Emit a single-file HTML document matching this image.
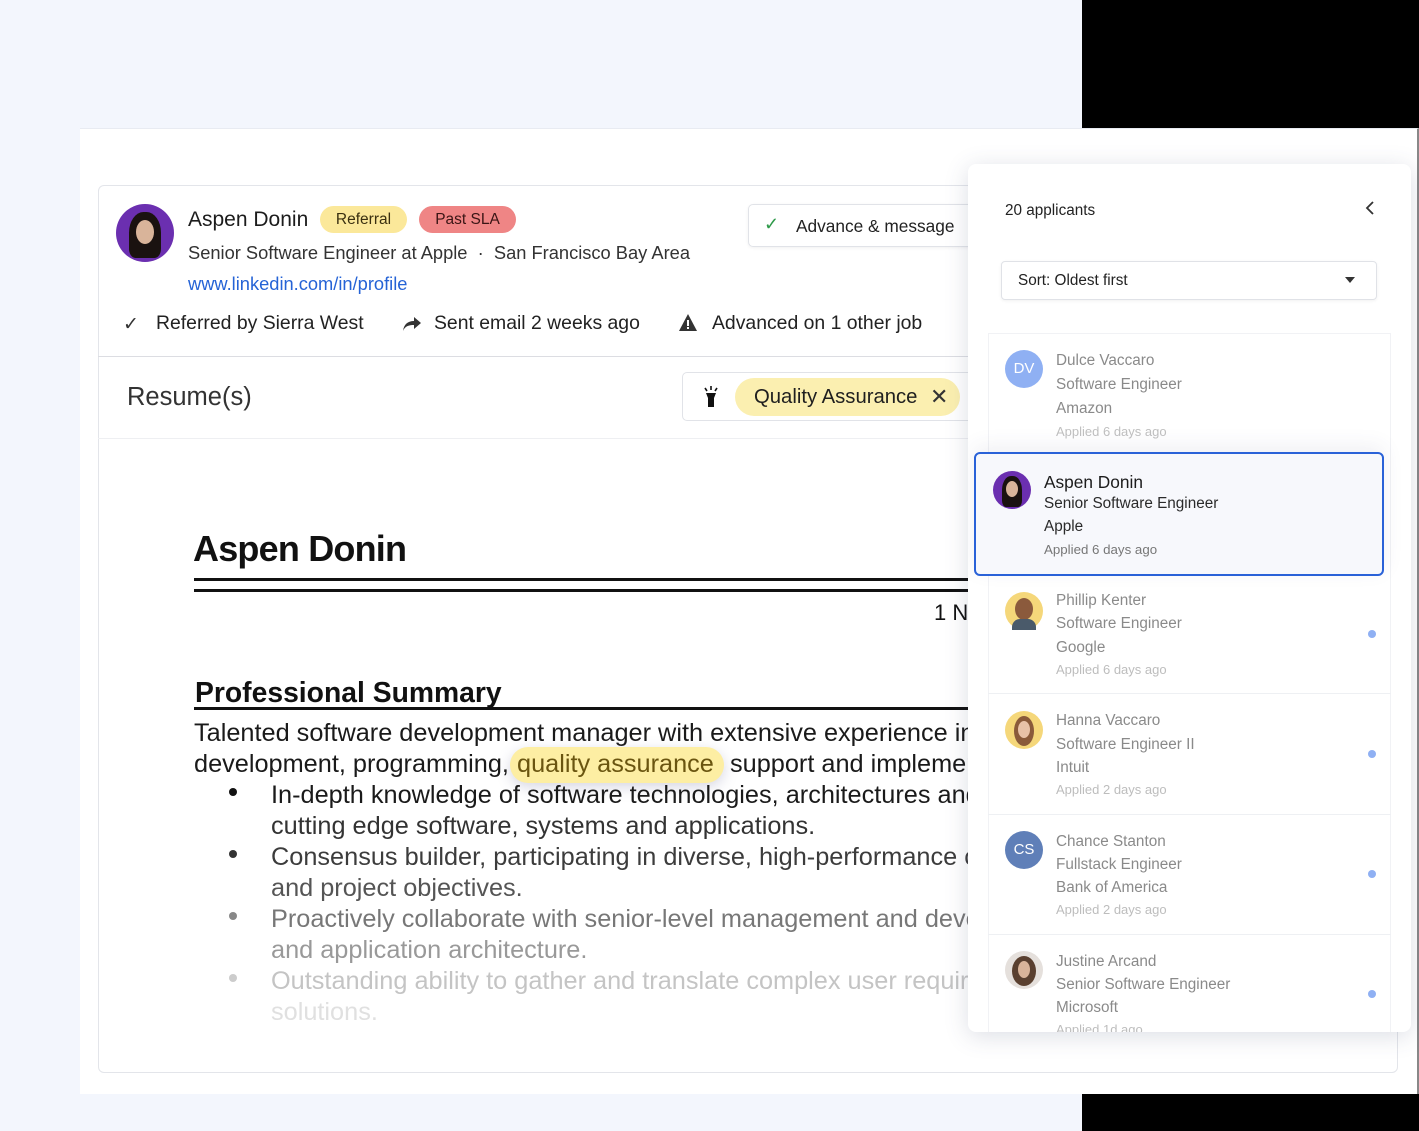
<!DOCTYPE html>
<html><head><meta charset="utf-8"><style>
*{margin:0;padding:0;box-sizing:border-box}
body{width:1419px;height:1131px;background:#f3f6fd;position:relative;overflow:hidden;font-family:"Liberation Sans",sans-serif;color:#1f1f1f}
.a{position:absolute;white-space:nowrap}
.blk{position:absolute;background:#000}
.rt{font-size:25.3px;line-height:31px;color:#1a1a1a}
.av{position:absolute;width:38px;height:38px;border-radius:50%}
.it .t{position:absolute;font-size:15.3px;color:#8a8a8a;white-space:nowrap}
.dot{position:absolute;width:8px;height:8px;border-radius:50%;background:#8fb0f3}
.bul{position:absolute;width:8px;height:8px;border-radius:50%}
</style></head><body>
<div class="blk" style="left:1082px;top:0;width:337px;height:128px"></div>
<div class="blk" style="left:1082px;top:1094px;width:337px;height:37px"></div>
<div class="a" style="left:80px;top:128px;width:1339px;height:966px;background:#fff;border-right:2px solid #888;border-top:1px solid #e8ebf2"></div>
<div class="a" style="left:98px;top:185px;width:1300px;height:888px;border:1px solid #e3e5ea;border-radius:6px;background:#fff"></div>
<div class="a" style="left:98px;top:356px;width:870px;height:1px;background:#dcdde2"></div>
<div class="a" style="left:98px;top:438px;width:870px;height:1px;background:#eeeff2"></div>

<!-- header -->
<div class="av" style="left:116px;top:204px;width:58px;height:58px;background:#6b2fb0"><div style="position:absolute;left:13px;top:8px;width:32px;height:46px;border-radius:45% 45% 20% 20%;background:#1a1210"></div><div style="position:absolute;left:20px;top:16px;width:18px;height:24px;border-radius:50%;background:#d9b49a"></div></div>
<div class="a" style="left:188px;top:208px;font-size:21px;color:#1c1c1c">Aspen Donin</div>
<div class="a" style="left:320px;top:206px;width:87px;height:27px;border-radius:14px;background:#fbe89a;font-size:15.5px;line-height:27px;text-align:center;color:#3a3010">Referral</div>
<div class="a" style="left:419px;top:206px;width:97px;height:27px;border-radius:14px;background:#ef8585;font-size:15.5px;line-height:27px;text-align:center;color:#3a1515">Past SLA</div>
<div class="a" style="left:188px;top:242px;font-size:18.3px;color:#333">Senior Software Engineer at Apple &nbsp;·&nbsp; San Francisco Bay Area</div>
<div class="a" style="left:188px;top:273px;font-size:18.3px;color:#2563d6">www.linkedin.com/in/profile</div>
<div class="a" style="left:748px;top:204px;width:240px;height:43px;border:1px solid #e1e3e8;border-radius:5px;box-shadow:0 1px 3px rgba(0,0,0,.06)"></div>
<div class="a" style="left:764px;top:214px;font-size:18px;color:#2f9a4a">✓</div>
<div class="a" style="left:796px;top:216px;font-size:17.3px;color:#222">Advance &amp; message</div>
<div class="a" style="left:123px;top:313px;font-size:19px;color:#333">✓</div>
<div class="a" style="left:156px;top:312px;font-size:19.4px;color:#222">Referred by Sierra West</div>
<svg class="a" style="left:402px;top:316px" width="20" height="16" viewBox="0 0 20 16"><path d="M12 1l7 6-7 6V9C7 9 3 10 1 15 2 8 6 5 12 5z" fill="#333"/></svg>
<div class="a" style="left:434px;top:312px;font-size:19.4px;color:#222">Sent email 2 weeks ago</div>
<svg class="a" style="left:678px;top:313px" width="20" height="19" viewBox="0 0 20 19"><path d="M10 1L19 18H1z" fill="#333"/><rect x="9" y="7" width="2" height="6" fill="#fff"/><rect x="9" y="14" width="2" height="2" fill="#fff"/></svg>
<div class="a" style="left:712px;top:312px;font-size:19.4px;color:#222">Advanced on 1 other job</div>

<div class="a" style="left:127px;top:383px;font-size:25.5px;color:#333">Resume(s)</div>
<div class="a" style="left:682px;top:372px;width:300px;height:49px;border:1px solid #e1e3e8;border-radius:5px"></div>
<svg class="a" style="left:702px;top:385px" width="18" height="24" viewBox="0 0 18 24"><path d="M4 8h10l-2 5v9H6v-9z" fill="#111"/><path d="M9 1v4M3 3l2 3M15 3l-2 3" stroke="#111" stroke-width="1.6"/></svg>
<div class="a" style="left:735px;top:378px;width:225px;height:38px;border-radius:19px;background:#fbefb0"></div>
<div class="a" style="left:754px;top:386px;font-size:20.3px;color:#1f1f1f">Quality Assurance</div>
<div class="a" style="left:930px;top:384px;font-size:22px;color:#333">✕</div>

<!-- resume -->
<div class="a" style="left:193px;top:528px;font-size:36px;font-weight:bold;color:#111;letter-spacing:-0.8px">Aspen Donin</div>
<div class="a" style="left:194px;top:578px;width:776px;height:3px;background:#111"></div>
<div class="a" style="left:194px;top:589px;width:776px;height:3px;background:#111"></div>
<div class="a" style="left:934px;top:600px;font-size:22px;color:#111">1 N</div>
<div class="a" style="left:195px;top:676px;font-size:28.3px;font-weight:bold;color:#111">Professional Summary</div>
<div class="a" style="left:194px;top:707px;width:776px;height:3px;background:#111"></div>
<div style="position:absolute;left:194px;top:718px;width:774px;height:320px;overflow:hidden">
<div class="a rt" style="left:0;top:0">Talented software development manager with extensive experience in</div>
<div class="a" style="left:316px;top:29px;width:214px;height:36px;border-radius:18px;background:#fdeea3;box-shadow:0 4px 14px rgba(120,120,160,.3)"></div>
<div class="a rt" style="left:0;top:31px">development, programming,</div>
<div class="a rt" style="left:323px;top:31px;color:#6a5510">quality assurance</div>
<div class="a rt" style="left:536px;top:31px">support and implementation</div>
<div class="bul" style="left:35px;top:70px;background:#111"></div>
<div class="a rt" style="left:77px;top:62px">In-depth knowledge of software technologies, architectures and</div>
<div class="a rt" style="left:77px;top:93px;color:#333">cutting edge software, systems and applications.</div>
<div class="bul" style="left:35px;top:132px;background:#333"></div>
<div class="a rt" style="left:77px;top:124px;color:#3c3c3c">Consensus builder, participating in diverse, high-performance cross</div>
<div class="a rt" style="left:77px;top:155px;color:#555">and project objectives.</div>
<div class="bul" style="left:35px;top:194px;background:#888"></div>
<div class="a rt" style="left:77px;top:186px;color:#777">Proactively collaborate with senior-level management and develop</div>
<div class="a rt" style="left:77px;top:217px;color:#999">and application architecture.</div>
<div class="bul" style="left:35px;top:256px;background:#ccc"></div>
<div class="a rt" style="left:77px;top:248px;color:#c4c4c4">Outstanding ability to gather and translate complex user requirements</div>
<div class="a rt" style="left:77px;top:279px;color:#e0e0e0">solutions.</div>
</div>

<!-- right panel -->
<div class="a" style="left:968px;top:164px;width:443px;height:868px;background:#fff;border-radius:8px;box-shadow:0 4px 24px rgba(60,70,110,.18);overflow:hidden">
<div class="a" style="left:37px;top:38px;font-size:15.3px;color:#222">20 applicants</div>
<svg class="a" style="left:396px;top:36px" width="12" height="16" viewBox="0 0 12 16"><path d="M9 2L3 8l6 6" stroke="#333" stroke-width="1.8" fill="none"/></svg>
<div class="a" style="left:33px;top:97px;width:376px;height:39px;border:1px solid #e0e2e7;border-radius:4px;box-shadow:0 1px 3px rgba(0,0,0,.06)"></div>
<div class="a" style="left:50px;top:108px;font-size:15.3px;color:#222">Sort: Oldest first</div>
<svg class="a" style="left:377px;top:113px" width="10" height="6"><path d="M0 0h10L5 6z" fill="#333"/></svg>
<div class="a" style="left:20px;top:169px;width:403px;height:700px;border-left:1px solid #f1f2f5;border-right:1px solid #f1f2f5"></div>
<div class="a" style="left:20px;top:169px;width:403px;height:1px;background:#f1f2f5"></div>
<div class="a" style="left:20px;top:529px;width:403px;height:1px;background:#eef0f3"></div>
<div class="a" style="left:20px;top:650px;width:403px;height:1px;background:#eef0f3"></div>
<div class="a" style="left:20px;top:770px;width:403px;height:1px;background:#eef0f3"></div>

<div class="it">
<div class="av" style="left:37px;top:186px;background:#8fb0f3;color:#fff;font-size:15px;line-height:38px;text-align:center">DV</div>
<div class="t" style="left:88px;top:188px">Dulce Vaccaro</div>
<div class="t" style="left:88px;top:212px">Software Engineer</div>
<div class="t" style="left:88px;top:236px">Amazon</div>
<div class="t" style="left:88px;top:260px;font-size:13px;color:#c0c0c0">Applied 6 days ago</div>
</div>

<div class="a" style="left:6px;top:288px;width:410px;height:124px;border:2px solid #2a62d8;border-radius:6px;background:#f7f8fc;box-shadow:0 -6px 20px rgba(60,70,110,.08)"></div>
<div class="av" style="left:25px;top:307px;background:#6b2fb0"><div style="position:absolute;left:9px;top:5px;width:20px;height:31px;border-radius:45% 45% 20% 20%;background:#1a1210"></div><div style="position:absolute;left:13px;top:10px;width:12px;height:16px;border-radius:50%;background:#d9b49a"></div></div>
<div class="a" style="left:76px;top:308px;font-size:17.3px;color:#1c1c1c">Aspen Donin</div>
<div class="a" style="left:76px;top:331px;font-size:15.3px;color:#2a2a2a">Senior Software Engineer</div>
<div class="a" style="left:76px;top:354px;font-size:15.3px;color:#2a2a2a">Apple</div>
<div class="a" style="left:76px;top:378px;font-size:13.3px;color:#777">Applied 6 days ago</div>

<div class="it">
<div class="av" style="left:37px;top:428px;background:#f5d77a"><div style="position:absolute;left:10px;top:6px;width:18px;height:22px;border-radius:50%;background:#8b5a3c"></div><div style="position:absolute;left:7px;top:27px;width:24px;height:11px;border-radius:8px 8px 0 0;background:#4a5a6a"></div></div>
<div class="t" style="left:88px;top:428px">Phillip Kenter</div>
<div class="t" style="left:88px;top:451px">Software Engineer</div>
<div class="t" style="left:88px;top:475px">Google</div>
<div class="t" style="left:88px;top:498px;font-size:13px;color:#bdbdbd">Applied 6 days ago</div>
<div class="dot" style="left:400px;top:466px"></div>

<div class="av" style="left:37px;top:547px;background:#f5d77a"><div style="position:absolute;left:9px;top:5px;width:20px;height:30px;border-radius:50%;background:#8a5a3a"></div><div style="position:absolute;left:13px;top:10px;width:12px;height:17px;border-radius:50%;background:#e8c2a8"></div></div>
<div class="t" style="left:88px;top:548px">Hanna Vaccaro</div>
<div class="t" style="left:88px;top:572px">Software Engineer II</div>
<div class="t" style="left:88px;top:595px">Intuit</div>
<div class="t" style="left:88px;top:618px;font-size:13px;color:#bdbdbd">Applied 2 days ago</div>
<div class="dot" style="left:400px;top:586px"></div>

<div class="av" style="left:37px;top:667px;background:#5f7fb8;color:#fff;font-size:15px;line-height:38px;text-align:center">CS</div>
<div class="t" style="left:88px;top:669px">Chance Stanton</div>
<div class="t" style="left:88px;top:692px">Fullstack Engineer</div>
<div class="t" style="left:88px;top:715px">Bank of America</div>
<div class="t" style="left:88px;top:738px;font-size:13px;color:#bdbdbd">Applied 2 days ago</div>
<div class="dot" style="left:400px;top:706px"></div>

<div class="av" style="left:37px;top:787px;background:#e5e0dc"><div style="position:absolute;left:7px;top:5px;width:24px;height:30px;border-radius:50%;background:#5a4030"></div><div style="position:absolute;left:13px;top:10px;width:12px;height:17px;border-radius:50%;background:#d9b49a"></div></div>
<div class="t" style="left:88px;top:789px">Justine Arcand</div>
<div class="t" style="left:88px;top:812px">Senior Software Engineer</div>
<div class="t" style="left:88px;top:835px">Microsoft</div>
<div class="t" style="left:88px;top:858px;font-size:13px;color:#bdbdbd">Applied 1d ago</div>
<div class="dot" style="left:400px;top:826px"></div>
</div>
</div>
</body></html>
